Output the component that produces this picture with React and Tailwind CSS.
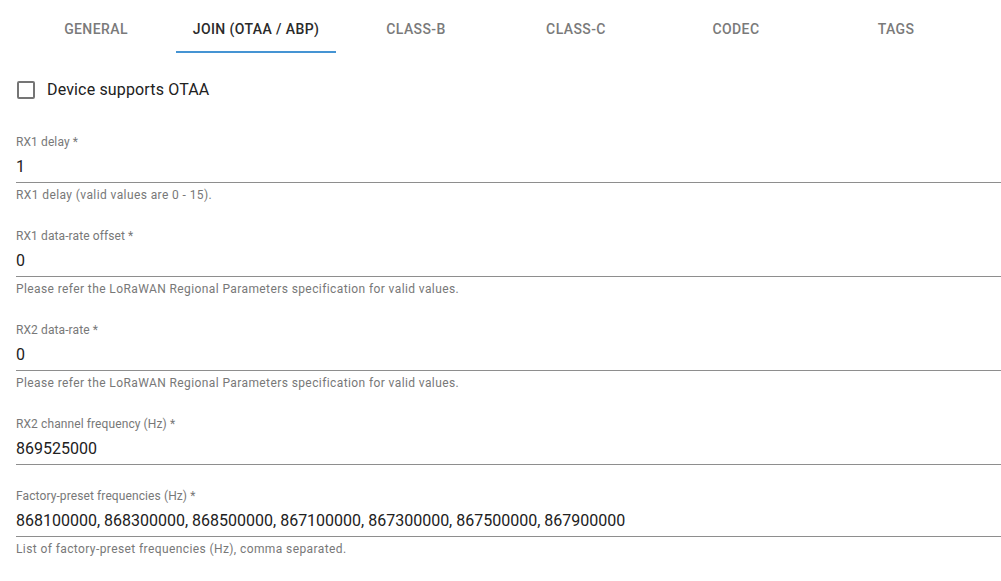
import React, { useState } from "react";

const tabs = ["General", "Join (OTAA / ABP)", "Class-B", "Class-C", "Codec", "Tags"];

const fields = [
  {
    label: "RX1 delay *",
    value: "1",
    helper: "RX1 delay (valid values are 0 - 15).",
  },
  {
    label: "RX1 data-rate offset *",
    value: "0",
    helper: "Please refer the LoRaWAN Regional Parameters specification for valid values.",
  },
  {
    label: "RX2 data-rate *",
    value: "0",
    helper: "Please refer the LoRaWAN Regional Parameters specification for valid values.",
  },
  {
    label: "RX2 channel frequency (Hz) *",
    value: "869525000",
  },
  {
    label: "Factory-preset frequencies (Hz) *",
    value: "868100000, 868300000, 868500000, 867100000, 867300000, 867500000, 867900000",
    helper: "List of factory-preset frequencies (Hz), comma separated.",
  },
];

const Field = ({ label, value, helper, first }) => (
  <div className={`flex flex-col ${first ? "" : "mt-6"}`}>
    <label className="h-4 text-xs leading-[14px] text-[#787878] tracking-[0.1px]">{label}</label>
    <div className="h-8 pt-[4px] pb-[9px] border-b border-[#8e8e8e]">
      <input
        readOnly
        value={value}
        className="w-full text-base leading-[19px] h-[19px] text-[#212121] outline-none bg-transparent"
      />
    </div>
    {helper && (
      <p className="mt-[3px] text-xs leading-[19px] text-[#787878] tracking-[0.4px]">{helper}</p>
    )}
  </div>
);

export default function App() {
  const [active, setActive] = useState(1);
  const [otaa, setOtaa] = useState(false);

  return (
    <div className="min-h-screen bg-white pl-4 pt-[5px] font-['Roboto',sans-serif]">
      {/* tabs */}
      <div className="flex">
        {tabs.map((t, i) => (
          <button
            key={t}
            onClick={() => setActive(i)}
            className={`relative w-[160px] h-12 flex items-center justify-center text-sm font-medium uppercase tracking-[0.4px] ${
              i === active ? "text-[#2a2a2a]" : "text-[#7a7a7a]"
            }`}
          >
            {t}
            {i === active && <span className="absolute left-0 right-0 bottom-0 h-[2px] bg-[#4594d3]" />}
          </button>
        ))}
      </div>

      {/* checkbox */}
      <label className="mt-4 -ml-[11px] flex items-center h-[42px] cursor-pointer">
        <span className="w-[42px] h-[42px] flex items-center justify-center" onClick={() => setOtaa(!otaa)}>
          <span
            className={`w-[18px] h-[18px] rounded-[2px] border-2 ${
              otaa ? "border-[#4594d3] bg-[#4594d3]" : "border-[#757575]"
            }`}
          />
        </span>
        <span className="text-base text-[#212121] tracking-[0.15px]">Device supports OTAA</span>
      </label>

      {/* fields */}
      <div className="mt-[24px] flex flex-col">
        {fields.map((f, i) => (
          <Field key={f.label} {...f} first={i === 0} />
        ))}
      </div>
    </div>
  );
}
